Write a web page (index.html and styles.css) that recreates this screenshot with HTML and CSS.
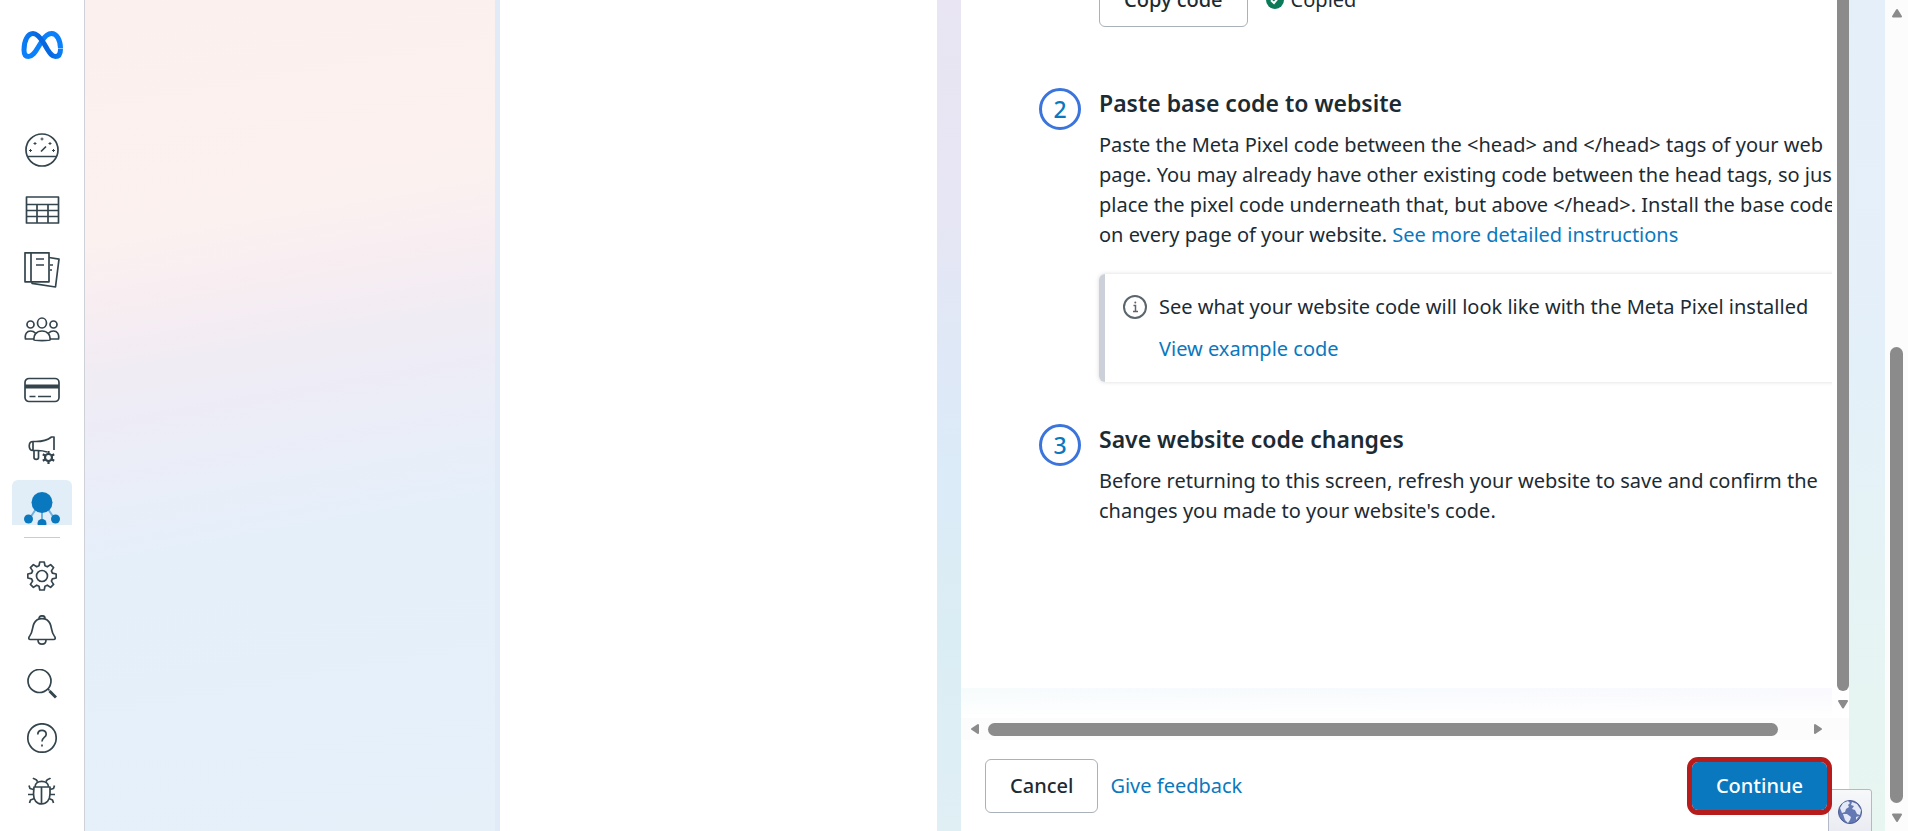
FILE: index.html
```html
<!DOCTYPE html>
<html lang="en">

<head>
    <meta charset="utf-8">
    <meta name="viewport" content="width=device-width, initial-scale=1.0">
    <title>Install Meta Pixel</title>
    <link rel="stylesheet" href="styles.css">
</head>

<body>
    <aside class="sidebar">
        <a class="logo" href="#" aria-label="Meta">
            <svg width="42" height="28" viewBox="0 0 42 28" fill="none" stroke-width="5">
                <defs>
                    <linearGradient id="loop" x1="0" x2="1" y1="0" y2="0">
                        <stop offset="0" stop-color="#0a7cf5" />
                        <stop offset="0.35" stop-color="#0668e1" />
                        <stop offset="0.7" stop-color="#0668e1" />
                        <stop offset="1" stop-color="#0a7cf5" />
                    </linearGradient>
                </defs>
                <path stroke="#0a80fb" d="M3 19c0 4 1.500 6.500 4.500 6.500 4 0 6.500-4 9.500-9l4-6.500c3-5 6-7.500 9.500-7.500 5.500 0 9 7 9 15" />
                <path stroke="url(#loop)" d="M3 19C3 10 6.500 2.500 12 2.500c4 0 7 3.500 11 10l3.500 6c2.500 4 4.500 7 8 7s5-2.500 5-7.500" />
            </svg>
        </a>

        <nav class="main-nav">
            <a href="#" aria-label="Account overview">
                <svg width="36" height="36" viewBox="0 0 36 36">
                    <circle cx="18" cy="18" r="16" />
                    <path d="M3.500 24.500h29M17 19.500l5-5" />
                    <path d="M18 5.500v3M16.500 7h3M11 10v3M9.500 11.500h3M26 10v3M24.500 11.500h3M6.500 17v3M5 18.500h3M29.500 17v3M28 18.500h3" stroke-width="1" />
                </svg>
            </a>
            <a href="#" aria-label="Campaigns">
                <svg width="36" height="36" viewBox="0 0 36 36">
                    <path d="M2.500 5h32v26h-32zM2.500 12.500h32M2.500 18.500h32M2.500 24.500h32M13 12.500V31M24 12.500V31" />
                </svg>
            </a>
            <a href="#" aria-label="Ads reporting">
                <svg width="36" height="36" viewBox="0 0 36 36">
                    <path d="M1 .8h24v29H1zM7 .8v29M12 7h8M12 13h8" />
                    <path d="M25 5.500l10 1.600L31.500 35 8 31.300V30M26 13h3M26 18h2" />
                </svg>
            </a>
            <a href="#" aria-label="Audiences">
                <svg width="36" height="36" viewBox="0 0 36 36">
                    <ellipse cx="18" cy="11" rx="4.500" ry="5" />
                    <circle cx="6.500" cy="12.500" r="3.500" />
                    <circle cx="29.500" cy="12.500" r="3.500" />
                    <path d="M10 28c-.8-5 2.500-9 8-9s8.800 4 8 9c-.3.800-15.700.800-16 0zM9.500 27H1.500c-1-5 1.500-8 5-8 2 0 3.500.5 4.800 2M26.500 27h8c1-5-1.500-8-5-8-2 0-3.500.5-4.800 2" />
                </svg>
            </a>
            <a href="#" aria-label="Billing">
                <svg width="36" height="36" viewBox="0 0 36 36">
                    <rect x="1" y="6.500" width="34" height="23" rx="4" />
                    <path d="M1 14.500h34" stroke-width="4" />
                    <path d="M5.500 24.500h6M14 24.500h13" />
                </svg>
            </a>
            <a href="#" aria-label="Ad settings">
                <svg width="36" height="36" viewBox="0 0 36 36">
                    <path d="M9 9.500h3c6 0 11-1 15.500-4.500H30V18M9 9.500c-5 0-5 9 0 9h5c3 0 6 .5 9 1.500M9 9.500v9M10 18.500v7c0 2.500 4.500 2.500 4.500 0v-7" />
                    <g stroke-width="2.200">
                        <circle cx="24.500" cy="25.500" r="3.500" />
                        <path d="M24.500 19v3M24.500 29v3M18.800 22.200l2.600 1.500M27.500 27.300l2.700 1.500M18.800 28.800l2.600-1.500M27.500 23.700l2.700-1.500" />
                    </g>
                </svg>
            </a>
            <a class="active" href="#" aria-label="Events Manager">
                <svg class="solid" width="36" height="36" viewBox="0 0 36 36">
                    <path d="M12 17l-6 9M24 17l6 9M18 18v10" stroke="#6fb1df" stroke-width="2" />
                    <circle cx="18" cy="10.500" r="10.500" />
                    <circle cx="4.500" cy="27" r="4.500" />
                    <circle cx="31.500" cy="27" r="4.500" />
                    <circle cx="18" cy="31.500" r="4.500" />
                </svg>
            </a>
        </nav>

        <nav class="tool-nav">
            <a href="#" aria-label="Settings">
                <svg width="30" height="30" viewBox="0 0 30 30">
                    <circle cx="15" cy="15" r="5.500" />
                    <path d="M12.800 1h4.400l.8 3.800 2.300 1L23.600 3.600l3 3-2.200 3.300 1 2.300 3.800.8v4l-3.800.8-1 2.300 2.200 3.300-3 3-3.300-2.200-2.300 1-.8 3.800h-4.400l-.8-3.800-2.300-1-3.300 2.200-3-3 2.200-3.300-1-2.300L.8 17v-4l3.800-.8 1-2.300-2.200-3.300 3-3 3.300 2.200 2.300-1z" />
                </svg>
            </a>
            <a href="#" aria-label="Notifications">
                <svg width="30" height="30" viewBox="0 0 30 30">
                    <path d="M3 24.500c-1.800 0-1.300-2.500-.3-3.500C6 17 5 12.500 7 8.500 8.500 5.500 11 3.700 15 3.700s6.500 1.800 8 4.800c2 4 1 8.500 4.300 12.500 1 1 1.500 3.500-.3 3.500zM12 3.500c0-3.600 6-3.600 6 0M11 25c0 5.500 8 5.500 8 0" />
                </svg>
            </a>
            <a href="#" aria-label="Search">
                <svg width="30" height="30" viewBox="0 0 30 30">
                    <circle cx="12.500" cy="12" r="11.500" />
                    <path d="M21 20l1.500 1.500" />
                    <path d="M22.500 22l6.500 6.500" stroke-width="3" />
                </svg>
            </a>
            <a href="#" aria-label="Help">
                <svg width="30" height="30" viewBox="0 0 30 30">
                    <circle cx="15" cy="15" r="14.200" />
                    <path d="M10.800 11.500c0-5.500 8.400-5.500 8.400-.3 0 3.300-4.200 3.300-4.200 7.300M15 21.500v2" />
                </svg>
            </a>
            <a href="#" aria-label="Report a problem">
                <svg width="30" height="30" viewBox="0 0 30 30">
                    <path d="M7 10h16v7c0 6-3.500 10-8.500 10S6.500 23 6.500 17zM14.500 10v17M8 10c0-7.500 13.500-7.500 13.500 0M10.500 4.500C9 1.500 7.500 2.500 6 1M19 4.500c1.500-3 3-2 4.500-3.500" />
                    <path d="M6.500 12.500L3 11.500 2 8.500M6.500 17.500H1M7.500 21.500l-4 1.500-1 3M23 12.500l3.500-1 1-3M23 17.500h5M22 21.500l3.500 1.500 1 3" />
                </svg>
            </a>
        </nav>
    </aside>

    <main class="workspace">
        <section class="backdrop"></section>
        <section class="blank-card"></section>
        <div class="gutter"></div>

        <section class="dialog">
            <div class="scroll-area">
                <div class="viewport">
                    <div class="steps">
                        <div class="copy-row">
                            <button class="btn" type="button">Copy code</button>
                            <span class="copied">
                                <svg width="18" height="18" viewBox="0 0 18 18">
                                    <circle cx="9" cy="9" r="9" fill="#0b7a58" />
                                    <path d="M5 9.200l3 2.800 5-6" fill="none" stroke="#fff" stroke-width="2" />
                                </svg>
                                Copied
                            </span>
                        </div>

                        <div class="step">
                            <span class="number">2</span>
                            <div class="step-body">
                                <h2>Paste base code to website</h2>
                                <p>
                                    Paste the Meta Pixel code between the &lt;head&gt; and &lt;/head&gt; tags of your web
                                    page. You may already have other existing code between the head tags, so just
                                    place the pixel code underneath that, but above &lt;/head&gt;. Install the base code
                                    on every page of your website. <a href="#">See more detailed instructions</a>
                                </p>
                                <div class="callout">
                                    <svg width="24" height="24" viewBox="0 0 24 24" fill="none" stroke="#5b656d">
                                        <circle cx="12" cy="12" r="11" stroke-width="2" />
                                        <path d="M10.500 10.500H12.500V16.500M10 16.500h5" stroke-width="1.500" />
                                        <circle cx="12.300" cy="7.500" r="1" fill="#5b656d" stroke="none" />
                                    </svg>
                                    <div class="callout-text">
                                        <span>See what your website code will look like with the Meta Pixel installed</span>
                                        <a href="#">View example code</a>
                                    </div>
                                </div>
                            </div>
                        </div>

                        <div class="step">
                            <span class="number">3</span>
                            <div class="step-body">
                                <h2>Save website code changes</h2>
                                <p>
                                    Before returning to this screen, refresh your website to save and confirm the
                                    changes you made to your website's code.
                                </p>
                            </div>
                        </div>
                    </div>
                    <div class="fade"></div>
                </div>
                <div class="v-scroll">
                    <div class="thumb"></div>
                    <svg width="12" height="10" viewBox="0 0 12 10"><path d="M2 1h8l-4 6.500z" /></svg>
                </div>
            </div>

            <div class="h-scroll">
                <svg width="10" height="12" viewBox="0 0 10 12"><path d="M8 2v8L2 6z" /></svg>
                <div class="thumb"></div>
                <svg width="10" height="12" viewBox="0 0 10 12"><path d="M2 2v8l6-4z" /></svg>
            </div>

            <footer class="actions">
                <button class="btn" type="button">Cancel</button>
                <a href="#">Give feedback</a>
                <button class="btn primary" type="button">Continue</button>
            </footer>
        </section>

        <div class="right-gutter"></div>

        <button class="language" type="button" aria-label="Language">
            <svg width="24" height="24" viewBox="0 0 24 24">
                <circle cx="12" cy="12" r="11.500" fill="#6478b4" stroke="#4a5b93" />
                <path fill="#e3e9f7" d="M2 8l3-5 5-2 2 2-2 2 1 2-3 2-1 3-3 1zM5 14l4 0 4 3-1 3-2 3-3-3zM14 2l5 2 4 6-1 5-3-1-2-4-3-1 2-3-3-1zM18 17l3-1-3 4z" />
            </svg>
        </button>
    </main>

    <div class="page-scroll">
        <svg width="12" height="10" viewBox="0 0 12 10"><path d="M2 8.500h8L6 2z" /></svg>
        <div class="thumb"></div>
        <svg width="12" height="10" viewBox="0 0 12 10"><path d="M2 1.500h8L6 8z" /></svg>
    </div>
</body>

</html>
```

FILE: styles.css
```css
* {
    box-sizing: border-box;
}

body {
    display: flex;
    height: 100vh;
    margin: 0;
    overflow: hidden;
    background: #fff;
    color: #1c2b33;
    font-family: "Noto Sans", "Liberation Sans", sans-serif;
    font-size: 20px;
    line-height: 30px;
}

a {
    color: #0a78be;
    text-decoration: none;
}

/* Sidebar */
.sidebar {
    display: flex;
    flex-direction: column;
    flex: none;
    width: 85px;
    padding: 31px 12px 12px;
    border-right: 1px solid #ced2d8;
}

.logo {
    height: 89px;
    flex: none;
    text-align: center;
    line-height: 0;
}

.main-nav {
    flex: 1;
    min-height: 0;
    overflow: hidden;
}

.main-nav a,
.tool-nav a {
    display: flex;
    align-items: center;
    justify-content: center;
    height: 60px;
}

.main-nav svg,
.tool-nav svg {
    fill: none;
    stroke: #34444d;
    stroke-width: 1.7;
    stroke-linejoin: round;
}

.main-nav .active {
    border-radius: 6px;
    background: #e1edf7;
}

.main-nav .solid {
    fill: #0a78be;
    stroke: none;
}

.tool-nav {
    flex: none;
    margin-top: 12px;
    padding-top: 12px;
    background: linear-gradient(#c8cdd2, #c8cdd2) center top / 36px 1px no-repeat;
}

.tool-nav a {
    height: 54px;
}

/* Workspace columns */
.workspace {
    position: relative;
    display: flex;
    flex: 1;
    min-width: 0;
}

.backdrop {
    flex: 410 1 0;
    border-right: 5px solid #e0ebf7;
    background: linear-gradient(170deg, #fbf0ee 0%, #fbf1ef 27%, #f9eef1 32%, #f1ecf3 41%, #eeecf6 46%, #e9eef8 56%, #e5effa 63%, #e5f0f9 100%);
}

.blank-card {
    flex: 437 1 0;
}

.gutter {
    flex: none;
    width: 24px;
    background: linear-gradient(#e9e5f3 0%, #e7e6f4 25%, #dfe8f6 42%, #dbebf8 58%, #dbedf4 75%, #dfeff4 100%);
}

.right-gutter {
    flex: none;
    width: 36px;
    background: linear-gradient(#e5effa 0%, #e4f0f9 45%, #e5f3f5 68%, #e7f6f0 100%);
}

/* Dialog */
.dialog {
    display: flex;
    flex-direction: column;
    flex: 888 1 0;
    min-width: 0;
}

.scroll-area {
    display: flex;
    flex: 1;
    min-height: 0;
}

.viewport {
    display: flex;
    flex-direction: column;
    flex: 1;
    min-width: 0;
    overflow: hidden;
}

.steps {
    flex: 1;
    min-height: 0;
    width: 900px;
    padding-left: 78px;
}

/* Scrolled part way past the first step */
.copy-row {
    display: flex;
    align-items: center;
    gap: 18px;
    margin: -27px 0 61px 60px;
}

.copied {
    display: flex;
    align-items: center;
    gap: 7px;
}

.step {
    display: flex;
    align-items: flex-start;
    gap: 18px;
    margin-bottom: 42px;
}

.number {
    flex: none;
    width: 42px;
    height: 42px;
    border: 3px solid #3b74dc;
    border-radius: 50%;
    color: #0a78be;
    font-size: 23px;
    font-weight: 500;
    line-height: 36px;
    text-align: center;
}

.step-body {
    flex: 1;
}

.step h2 {
    margin: 0 0 12px;
    font-size: 23px;
    font-weight: 600;
    line-height: 30px;
}

.step p {
    margin: 0;
}

.callout {
    display: flex;
    gap: 12px;
    height: 108px;
    margin-top: 24px;
    padding: 18px;
    border-left: 6px solid #ccd1d9;
    border-radius: 6px;
    box-shadow: 0 0 4px rgba(0, 0, 0, 0.15);
}

.callout svg {
    flex: none;
    margin-top: 3px;
}

.callout-text {
    display: flex;
    flex-direction: column;
    gap: 12px;
}

.fade {
    flex: none;
    height: 30px;
    background: linear-gradient(rgba(255, 255, 255, 0), #fff), linear-gradient(90deg, #f6fbfc, #f9f9fe);
}

/* Scroll bars */
.thumb {
    border-radius: 7px;
    background: #8b8b8b;
}

.v-scroll svg,
.h-scroll svg,
.page-scroll svg {
    flex: none;
    fill: #8b8b8b;
    stroke: #8b8b8b;
    stroke-width: 2;
    stroke-linejoin: round;
}

.v-scroll {
    display: flex;
    flex-direction: column;
    align-items: flex-end;
    gap: 9px;
    flex: none;
    width: 17px;
    padding-bottom: 8px;
}

.v-scroll .thumb {
    flex: 1;
    width: 12px;
    border-radius: 0 0 6px 6px;
}

.h-scroll {
    display: flex;
    align-items: center;
    flex: none;
    height: 22px;
    padding: 0 26px 0 9px;
    background: #fcfcfc;
}

.h-scroll .thumb {
    flex: 1;
    height: 13px;
    margin: 0 35px 0 8px;
}

.page-scroll {
    display: flex;
    flex-direction: column;
    align-items: center;
    flex: none;
    width: 23px;
    padding: 8px 0;
    background: #fcfcfc;
}

.page-scroll .thumb {
    flex: none;
    width: 13px;
    height: 56%;
    margin: auto 0 10px;
}

/* Dialog footer */
.actions {
    display: flex;
    align-items: center;
    gap: 12px;
    flex: none;
    padding: 19px 22px 18px 24px;
}

.btn {
    height: 54px;
    padding: 0 24px;
    border: 1px solid #a9b1ba;
    border-radius: 6px;
    background: #fff;
    color: #1c2b33;
    font: inherit;
    font-weight: 500;
}

.primary {
    z-index: 1;
    height: 48px;
    margin-left: auto;
    border: 0;
    outline: 5px solid #b71c1c;
    background: #0a78be;
    color: #fff;
}

.language {
    position: absolute;
    right: 13px;
    bottom: -4px;
    width: 44px;
    height: 46px;
    padding: 0;
    border: 1px solid #b3b9c6;
    border-radius: 3px;
    background: linear-gradient(#f7f8fa, #e9ebf2);
    line-height: 0;
}
```
